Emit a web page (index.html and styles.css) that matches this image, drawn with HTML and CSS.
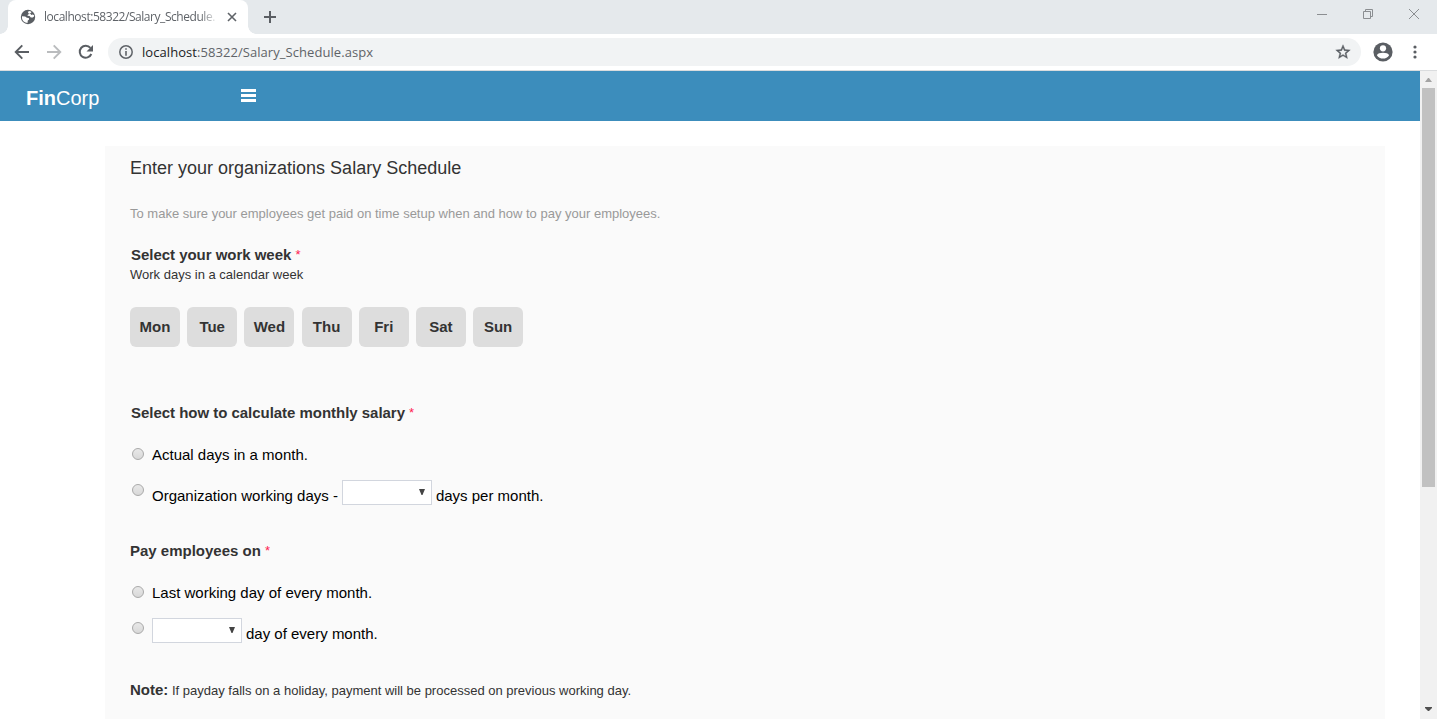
FILE: index.html
```html
<!DOCTYPE html>
<html lang="en">
<head>
<meta charset="utf-8">
<title>localhost:58322/Salary_Schedule.aspx</title>
<link rel="stylesheet" href="styles.css">
</head>
<body>
<div class="browser">
  <div class="tabstrip">
    <div class="tab">
      <svg class="favicon" width="16" height="16" viewBox="0 0 16 16"><circle cx="8" cy="8" r="7.200" fill="#5a5e63"/><path fill="#fff" d="M2 7.200l3.200.3 1.700 1.200 1.900.2.300 1.500-1.300 1-.3 2.500-2-.3A6 6 0 0 1 2 7.200zM7.800 2.800l2-.8 1.800 1.100L10 4.800l-2 .6-.6 1.300 2.200.4 1.200 1.300 2 .2 1.200-1.200.1-1.100-1.500-.8-1.300.6-.7-1.200-2-.5z"/></svg>
      <span class="tab-title">localhost:58322/Salary_Schedule.</span>
      <svg class="tab-close" width="10" height="10" viewBox="0 0 10 10"><path d="M1 1l8 8M9 1L1 9" stroke="#5f6368" stroke-width="1.600"/></svg>
    </div>
    <svg class="new-tab" width="12" height="12" viewBox="0 0 12 12"><path d="M6 0v12M0 6h12" stroke="#5a5e63" stroke-width="2"/></svg>
    <div class="window-buttons">
      <svg width="12" height="12" viewBox="0 0 12 12"><path d="M1 6.500h10" stroke="#8b8e91"/></svg>
      <svg width="12" height="12" viewBox="0 0 12 12" fill="none" stroke="#8b8e91"><path d="M1.500 3.500h7v7h-7zM3.500 3.500v-2h7v7h-2"/></svg>
      <svg width="12" height="12" viewBox="0 0 12 12"><path d="M1 1l10 10M11 1L1 11" stroke="#8b8e91"/></svg>
    </div>
  </div>
  <div class="toolbar">
    <svg width="16" height="16" viewBox="0 0 16 16" fill="none" stroke="#5a5e63" stroke-width="1.900"><path d="M15 8H2M8.300 1.300L1.700 8l6.600 6.700"/></svg>
    <svg width="16" height="16" viewBox="0 0 16 16" fill="none" stroke="#babcbe" stroke-width="1.900"><path d="M1 8h13M7.700 1.300L14.300 8l-6.600 6.700"/></svg>
    <svg width="16" height="16" viewBox="0 0 16 16"><path d="M13.300 10A6 6 0 1 1 12.400 3.900" fill="none" stroke="#5a5e63" stroke-width="2"/><path d="M15 1v6.500H8.500z" fill="#5a5e63"/></svg>
    <div class="address">
      <svg width="16" height="16" viewBox="0 0 16 16"><circle cx="8" cy="8" r="6.200" fill="none" stroke="#5f6368" stroke-width="1.500"/><path d="M8 4.200v1.600M8 7v4.800" stroke="#5f6368" stroke-width="1.600"/></svg>
      <span class="url"><span class="host">localhost</span>:58322/Salary_Schedule.aspx</span>
      <svg class="star" width="16" height="16" viewBox="1 1 22 22"><path fill="#5a5e63" stroke="#5a5e63" stroke-width=".5" d="M22 9.240l-7.190-.62L12 2 9.190 8.630 2 9.240l5.460 4.730L5.820 21 12 17.270 18.180 21l-1.630-7.030zM12 15.400l-3.760 2.270 1-4.280-3.320-2.880 4.380-.38L12 6.100l1.710 4.040 4.380.38-3.320 2.880 1 4.280z"/></svg>
    </div>
    <svg class="avatar" width="20" height="20" viewBox="0 0 20 20"><circle cx="10" cy="10" r="9.600" fill="#5a5e63"/><circle cx="10" cy="6.300" r="3.100" fill="#fff"/><path d="M3.900 13.200c1.300-3.200 10.900-3.200 12.200 0a7.200 7.200 0 0 1-12.200 0z" fill="#fff"/></svg>
    <svg class="dots" width="4" height="14" viewBox="0 0 4 14" fill="#5a5e63"><circle cx="2" cy="2" r="1.600"/><circle cx="2" cy="7" r="1.600"/><circle cx="2" cy="12" r="1.600"/></svg>
  </div>
  <div class="viewport">
    <div class="page">
      <header class="site-header">
        <div class="logo"><b>Fin</b>Corp</div>
        <svg class="menu" width="15" height="13" viewBox="0 0 15 13"><path d="M0 0h15v3H0zM0 5h15v3H0zM0 10h15v3H0z" fill="#fff"/></svg>
      </header>
      <main class="panel">
        <h1 class="title">Enter your organizations Salary Schedule</h1>
        <p class="intro">To make sure your employees get paid on time setup when and how to pay your employees.</p>
        <h2 class="heading shifted">Select your work week <span class="required">*</span></h2>
        <p class="hint">Work days in a calendar week</p>
        <div class="days">
          <span class="day">Mon</span><span class="day">Tue</span><span class="day">Wed</span><span class="day">Thu</span><span class="day">Fri</span><span class="day">Sat</span><span class="day">Sun</span>
        </div>
        <h2 class="heading shifted">Select how to calculate monthly salary <span class="required">*</span></h2>
        <div class="option">
          <i class="radio"></i><span class="label">Actual days in a month.</span>
        </div>
        <div class="option with-select">
          <i class="radio"></i><span class="label">Organization working days -</span>
          <span class="select"><svg width="6" height="6" viewBox="0 0 6 6"><path d="M0 0h6L3.500 6h-1z" fill="#444"/></svg></span>
          <span class="label">days per month.</span>
        </div>
        <h2 class="heading">Pay employees on <span class="required">*</span></h2>
        <div class="option">
          <i class="radio"></i><span class="label">Last working day of every month.</span>
        </div>
        <div class="option with-select">
          <i class="radio"></i><span class="select"><svg width="6" height="6" viewBox="0 0 6 6"><path d="M0 0h6L3.500 6h-1z" fill="#444"/></svg></span>
          <span class="label">day of every month.</span>
        </div>
        <p class="note"><b>Note:</b> <span class="note-text">If payday falls on a holiday, payment will be processed on previous working day.</span></p>
      </main>
    </div>
    <div class="scrollbar">
      <svg width="7" height="4" viewBox="0 0 7 4"><path d="M0 4h7L4 0H3z" fill="#a3a3a3"/></svg>
      <div class="thumb"></div>
      <svg class="down" width="7" height="4" viewBox="0 0 7 4"><path d="M0 0h7v1L4 4H3L0 1z" fill="#505050"/></svg>
    </div>
  </div>
</div>
</body>
</html>
```
FILE: styles.css
```css
* { box-sizing: border-box; }
body { margin: 0; background: #fff; font-family: "Liberation Sans", Arial, sans-serif; }
svg { display: block; flex: none; }
h1, h2, p { margin: 0; }
.browser { display: flex; flex-direction: column; height: 719px; overflow: hidden; }

.tabstrip { display: flex; height: 34px; flex: none; background: #e5e9ec; padding-left: 8px; align-items: center; }
.tab { position: relative; display: flex; align-items: center; width: 240px; height: 34px; padding-left: 12px; background: #fff; border-radius: 8px 8px 0 0; }
.tab::before, .tab::after { content: ""; position: absolute; bottom: 0; width: 8px; height: 8px; }
.tab::before { left: -8px; background: radial-gradient(circle at 0 0, #e5e9ec 7.5px, #fff 8px); }
.tab::after { right: -8px; background: radial-gradient(circle at 100% 0, #e5e9ec 7.5px, #fff 8px); }
.tab-title { width: 174px; margin-left: 8px; white-space: nowrap; font: 12px/16px "Open Sans", sans-serif; letter-spacing: -0.45px; color: #5f6368; -webkit-mask-image: linear-gradient(90deg, #000 156px, transparent 174px); mask-image: linear-gradient(90deg, #000 156px, transparent 174px); }
.tab-close { margin-left: 9px; }
.new-tab { margin-left: 16px; }
.window-buttons { display: flex; gap: 34px; margin: -6px 17px 0 auto; }

.toolbar { display: flex; align-items: center; height: 37px; flex: none; padding: 0 20px 0 14px; border-bottom: 1px solid #dadcde; gap: 16px; }
.address { display: flex; align-items: center; flex: 1; height: 28px; margin-left: -2px; padding: 0 10px; border-radius: 14px; background: #f1f3f4; }
.url { margin-left: 8px; font: 13px/18px "Open Sans", sans-serif; letter-spacing: 0.06px; color: #5f6368; }
.host { color: #202124; }
.star { margin-left: auto; }
.avatar { margin-left: -4px; }
.dots { margin-left: 4px; }

.viewport { display: flex; flex: 1; min-height: 0; }
.page { flex: 1; min-width: 0; overflow: hidden; }
.site-header { display: flex; height: 50px; background: #3c8dbc; padding-left: 26px; align-items: center; color: #fff; }
.logo { width: 215px; font-size: 20px; line-height: 24px; padding-top: 4px; }
.menu { margin-bottom: 1px; }
.panel { width: 1280px; height: 640px; margin: 25px 0 0 105px; padding: 11px 25px 0; background: #fafafa; color: #333; }
.title { font-size: 18px; line-height: 22px; font-weight: 400; }
.intro { margin-top: 26px; font-size: 13px; line-height: 18px; color: #999; }
.heading { font-size: 15px; line-height: 20px; font-weight: 700; margin-top: 32px; white-space: nowrap; }
.heading.shifted { padding-left: 1px; letter-spacing: -0.03px; }
.required { font-size: 13px; font-weight: 400; color: #ff2050; vertical-align: 1px; line-height: 1; }
.hint { padding-top: 1px; font-size: 13px; line-height: 18px; }
.days { display: flex; gap: 7.200px; margin-top: 23px; }
.day { width: 50px; height: 40px; border-radius: 6px; background: #ddd; font-size: 15px; font-weight: 700; line-height: 40px; text-align: center; }
.option { display: flex; height: 20px; margin-top: 22px; padding-left: 2px; color: #000; font-size: 15px; line-height: 20px; white-space: nowrap; }
.radio { flex: none; width: 12px; height: 12px; margin: 3px 8px 0 0; border: 1px solid #a9a9a9; border-radius: 50%; background: linear-gradient(#e8e8e8, #d8d8d8); }
.select { display: flex; justify-content: flex-end; align-items: center; width: 90px; height: 25px; margin: 0 4px; padding: 0 6px 1px 0; border: 1px solid #d2d6de; background: #fff; }
.with-select { height: 26px; margin-top: 15px; }
.with-select .radio { margin-top: 4px; }
.with-select .label { padding-top: 6px; }
.radio + .select { margin-left: 0; }
.intro + .heading { margin-top: 22px; }
.days + .heading { margin-top: 56px; }
.with-select + .heading { margin-top: 35px; }
.note { margin-top: 36px; font-size: 13px; line-height: 20px; }
.note b { font-size: 15px; }

.scrollbar { display: flex; flex-direction: column; align-items: center; width: 17px; flex: none; background: #f1f1f1; padding: 7px 0 8px; }
.thumb { width: 13px; height: 399px; margin-top: 6px; background: #c1c1c1; }
.down { margin-top: auto; }
```
